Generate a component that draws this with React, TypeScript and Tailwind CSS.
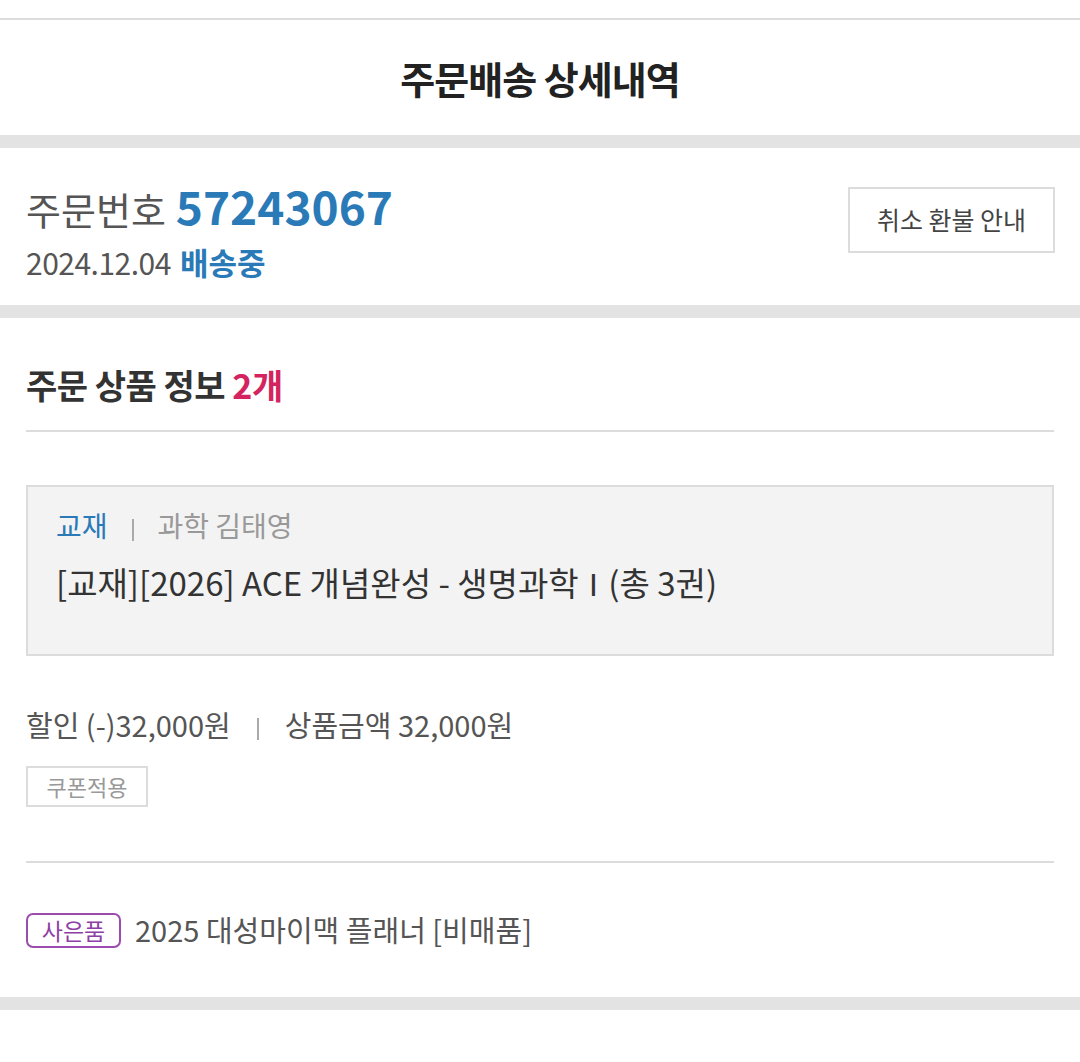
import React from "react";

const font = { fontFamily: '"Noto Sans CJK KR", "Noto Sans", sans-serif' };

const Band = () => <div className="h-[13px] bg-[#e3e3e3]" />;

const App = () => {
  return (
    <div className="w-[1080px] min-h-[1062px] bg-white text-[#333]" style={font}>
      {/* top spacer + line */}
      <div className="h-[20px] bg-white border-b-2 border-[#dcdcdc]" />

      {/* header */}
      <div className="h-[115px] flex items-center justify-center">
        <h1 className="text-[38px] font-bold tracking-[-1px] text-[#222]">주문배송 상세내역</h1>
      </div>
      <Band />

      {/* order info */}
      <div className="h-[157px] pl-[26px] pr-[25px] flex items-center justify-between">
        <div className="flex flex-col mt-[6px]">
          <div className="flex items-baseline gap-[10px] leading-none">
            <span className="text-[38px] text-[#555]">주문번호</span>
            <span className="text-[46px] font-bold text-[#2a7ab8]">57243067</span>
          </div>
          <div className="flex items-baseline gap-[9px] mt-[18px] leading-none">
            <span className="text-[30px] text-[#555] tracking-[-0.5px]">2024.12.04</span>
            <span className="text-[31px] font-bold text-[#2a7ab8]">배송중</span>
          </div>
        </div>
        <button className="w-[207px] h-[66px] border-2 border-[#dcdcdc] text-[25px] text-[#444] bg-white mb-[13px]">
          취소 환불 안내
        </button>
      </div>
      <Band />

      {/* products */}
      <div className="px-[26px]">
        <div className="h-[114px] flex items-center border-b-2 border-[#dcdcdc]">
          <h2 className="text-[34px] font-bold text-[#333] tracking-[-0.5px] mt-[20px]">
            주문 상품 정보 <span className="text-[#d3245f]">2개</span>
          </h2>
        </div>

        <div className="mt-[53px] h-[171px] bg-[#f3f3f3] border-2 border-[#dcdcdc] px-[28px] pt-[18px]">
          <div className="flex items-center text-[28px] leading-[40px]">
            <span className="text-[#2a7ab8]">교재</span>
            <span className="mx-[24px] w-[2px] h-[22px] bg-[#aaa] mt-[10px]" />
            <span className="text-[#999]">과학 김태영</span>
          </div>
          <div className="mt-[16px] text-[33px] text-[#333] leading-[42px]">
            [교재][2026] ACE 개념완성 - 생명과학{" "}
            <span className="font-['DejaVu_Sans'] text-[30px] mx-[3px]">Ⅰ</span> (총 3권)
          </div>
        </div>

        <div className="mt-[48px] flex items-center text-[29px] text-[#555] leading-[40px]">
          <span>할인 (-)32,000원</span>
          <span className="mx-[26px] w-[2px] h-[22px] bg-[#aaa] mt-[10px]" />
          <span>상품금액 32,000원</span>
        </div>
        <div className="mt-[22px] inline-flex items-center justify-center w-[122px] h-[41px] border-2 border-[#dcdcdc] text-[22px] text-[#999]">
          쿠폰적용
        </div>

        <div className="mt-[54px] border-b-2 border-[#dcdcdc]" />

        <div className="h-[134px] flex items-center gap-[14px]">
          <span className="inline-flex items-center justify-center w-[95px] h-[35px] border-2 border-[#9c4bae] rounded-[7px] text-[23px] text-[#8e3fa6] leading-none">
            사은품
          </span>
          <span className="text-[29px] text-[#555]">2025 대성마이맥 플래너 [비매품]</span>
        </div>
      </div>
      <Band />
    </div>
  );
};

export default App;
